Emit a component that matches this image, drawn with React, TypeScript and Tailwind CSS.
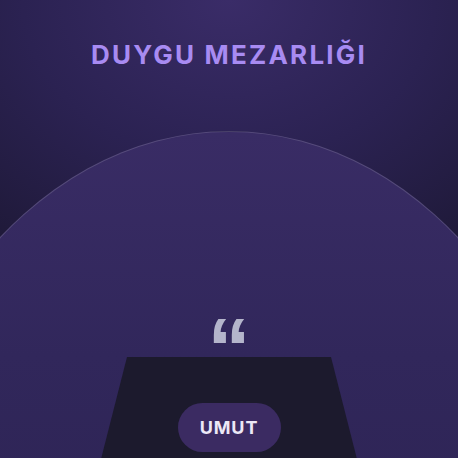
import React from "react";

export default function App() {
    return (
        <div
            className="relative w-[458px] h-[458px] overflow-hidden flex flex-col items-center bg-[radial-gradient(ellipse_90%_70%_at_50%_0%,#3a2c68_0%,#2b2252_50%,#1d1835_100%)]"
            style={{ fontFamily: "Inter, 'Noto Sans', sans-serif" }}
        >
            {/* Header */}
            <h1 className="mt-[39px] text-[26px] leading-[32px] font-bold tracking-[0.085em] text-[#a88bf2]">
                DUYGU MEZARLIĞI
            </h1>
            <div className="mt-[15px] h-px w-[390px] bg-[linear-gradient(to_right,transparent,rgba(190,170,240,0.4),transparent)]" />

            {/* Arch */}
            <div className="mt-[45px] shrink-0 w-[740px] h-[560px] rounded-tl-[370px_494px] rounded-tr-[370px_494px] border-t border-x border-white/15 bg-[linear-gradient(to_bottom,#392c65_0%,#31275b_40%,#2b2250_100%)] flex flex-col items-center">
                <span
                    className="mt-[173px] h-[51px] text-[86px] leading-[86px] font-bold text-[#b4b5cb]"
                    style={{ fontFamily: "'Liberation Sans', Arial, sans-serif" }}
                >
                    “
                </span>
                <div className="mt-[1px] w-[260px] h-[110px] bg-[#1c1a2d] [clip-path:polygon(28px_0,232px_0,100%_100%,0_100%)] flex justify-center">
                    <button className="mt-[46px] h-[49px] w-[103px] rounded-full bg-[#3b2b62] text-[18px] font-bold tracking-[0.05em] text-[#ece8f6]">
                        UMUT
                    </button>
                </div>
            </div>
        </div>
    );
}
